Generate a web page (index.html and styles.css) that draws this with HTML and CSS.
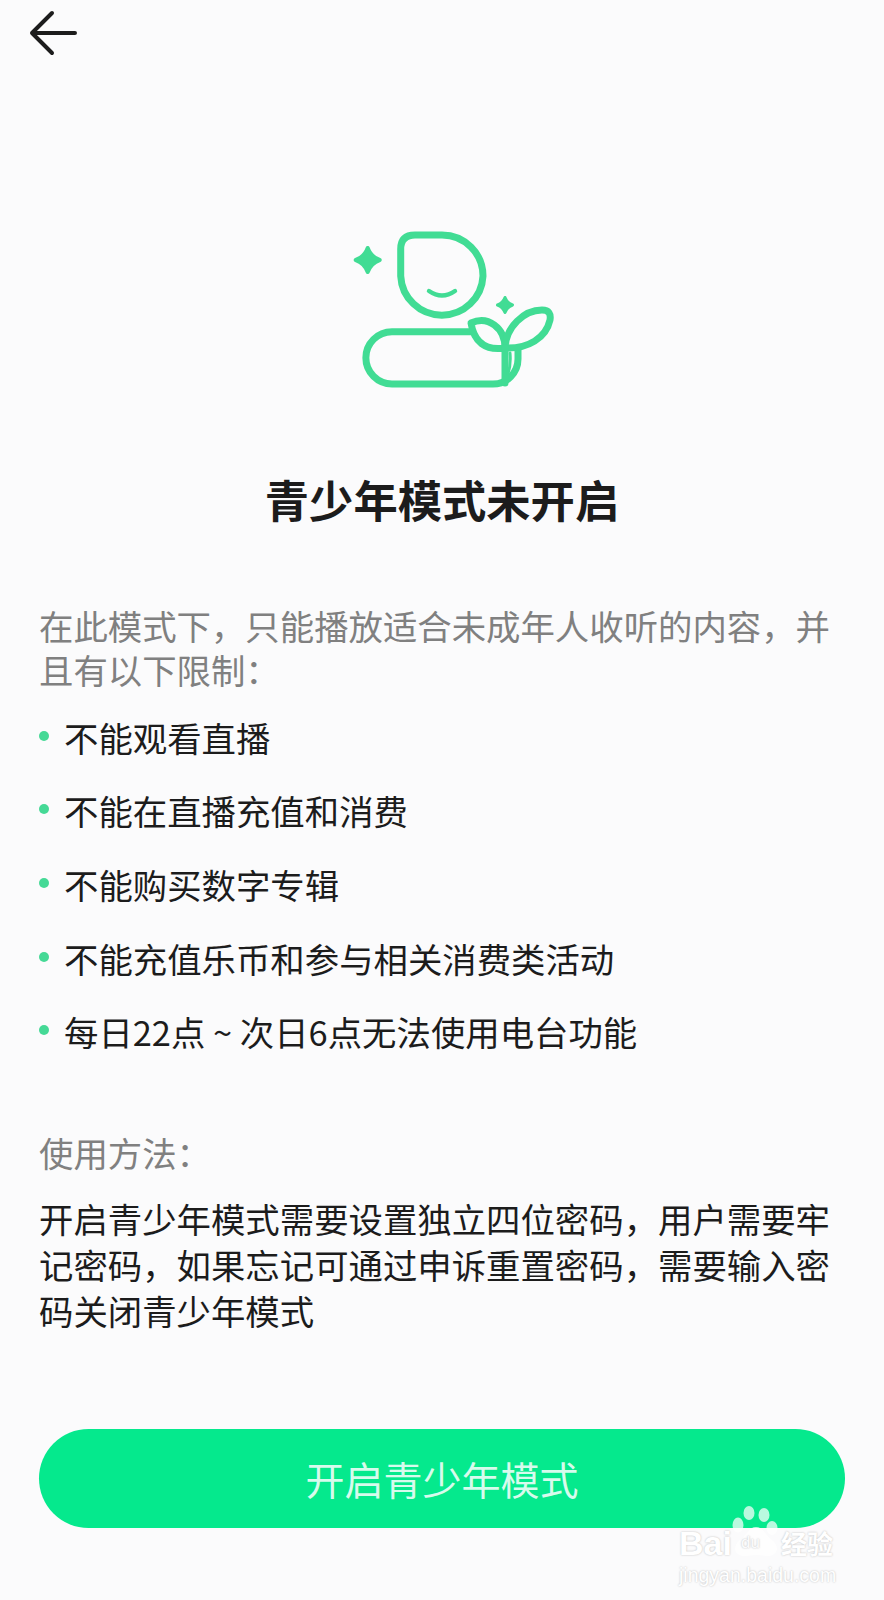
FILE: index.html
```html
<!DOCTYPE html>
<html lang="zh-CN">
<head>
    <meta charset="UTF-8">
    <meta name="viewport" content="width=device-width, initial-scale=1.0">
    <title>青少年模式</title>
    <link rel="stylesheet" href="styles.css">
</head>
<body>
    <div class="page">
        <div class="topbar">
            <svg class="back" width="60" height="56" viewBox="0 0 60 56" fill="none" stroke="#1c1c1c" stroke-width="4" stroke-linecap="round" stroke-linejoin="round">
                <path d="M23 13 L3 33 L23 53 M3 33 H46"/>
            </svg>
        </div>

        <div class="hero">
            <svg width="240" height="190" viewBox="0 0 240 190" fill="none" stroke="#41dc94" stroke-width="7" stroke-linecap="round" stroke-linejoin="round">
                <path d="M85 25 H112 A41 41 0 0 1 153 66 A41.2 41.2 0 0 1 70.7 66 V39 Q70.7 25 85 25 Z"/>
                <path d="M99 81 Q112 90 125 81" stroke-width="4.4"/>
                <path d="M141 121.7 H62 A26.1 26.1 0 0 0 62 174 H163 A25 25 0 0 0 188 149 V139"/>
                <path d="M141 113 C158 105 175 118 175 138 C155 141 144 132 141 113 Z"/>
                <path d="M175 138 C176 117 194 100 212 100 C219 100 221 104 220 110 C216 128 198 139 175 138 Z"/>
                <path d="M175 138 V173"/>
                <path d="M180 143 Q181 155 178 164" stroke-width="3"/>
                <path d="M37.7 38 Q41 47 49.700 50 Q41 53 37.7 62 Q34.500 53 25.700 50 Q34.500 47 37.7 38 Z" fill="#41dc94" stroke-width="4"/>
                <path d="M175 87.500 Q177 93 182.500 95 Q177 97 175 102.500 Q173 97 167.500 95 Q173 93 175 87.500 Z" fill="#41dc94" stroke-width="3"/>
            </svg>
        </div>

        <h1 class="title">青少年模式未开启</h1>

        <div class="content">
            <p class="note">在此模式下，只能播放适合未成年人收听的内容，并且有以下限制：</p>

            <ul class="limits">
                <li>不能观看直播</li>
                <li>不能在直播充值和消费</li>
                <li>不能购买数字专辑</li>
                <li>不能充值乐币和参与相关消费类活动</li>
                <li>每日22点 ~ 次日6点无法使用电台功能</li>
            </ul>

            <p class="note usage-label">使用方法：</p>
            <p class="usage">开启青少年模式需要设置独立四位密码，用户需要牢记密码，如果忘记可通过申诉重置密码，需要输入密码关闭青少年模式</p>
        </div>

        <button class="open-btn">开启青少年模式</button>

        <!-- watermark over the button corner -->
        <div class="watermark">
            <svg class="paw" width="64" height="64" viewBox="0 0 64 64" fill="#fff" fill-opacity="0.72">
                <ellipse cx="25" cy="9" rx="5.500" ry="7"/>
                <ellipse cx="40" cy="11" rx="5.500" ry="7"/>
                <ellipse cx="14" cy="21" rx="5.500" ry="7.500"/>
                <ellipse cx="48" cy="24" rx="5.500" ry="7"/>
                <path d="M32 23 C25 23 23 31 16 36 C7 43 11 53 22 52 C28 51 36 51 42 52 C53 53 57 43 48 36 C41 31 39 23 32 23 Z"/>
            </svg>
            <div class="wm-row"><span>Bai</span><span class="wm-du">du</span><span class="wm-cn">经验</span></div>
            <div class="wm-url">jingyan.baidu.com</div>
        </div>
    </div>
</body>
</html>
```

FILE: styles.css
```css
* {
    box-sizing: border-box;
}
body {
    margin: 0;
    background-color: #fbfbfc;
    font-family: "Noto Sans CJK SC", "Noto Sans", sans-serif;
}
.page {
    position: relative;
    width: 884px;
    height: 1600px;
    overflow: hidden;
}
.topbar {
    height: 70px;
    padding-left: 29px;
}
.back {
    display: block;
}
.hero {
    padding-left: 330px;
    margin-top: 140px;
    height: 190px;
}
.title {
    margin: 67px 0 0;
    font-size: 44.300px;
    line-height: 64px;
    font-weight: 700;
    color: #1c1c1c;
    text-align: center;
}
.content {
    margin-top: 72px;
    padding: 0 39px;
}
.note {
    margin: 0;
    font-size: 34.400px;
    line-height: 44px;
    color: #808080;
}
.limits {
    list-style: none;
    margin: 9px 0 0;
    padding: 0;
}
.limits li {
    display: flex;
    align-items: center;
    gap: 15px;
    height: 73.600px;
    font-size: 34.400px;
    color: #1c1c1c;
}
.limits li::before {
    content: "";
    width: 10px;
    height: 10px;
    margin-bottom: 2px;
    border-radius: 50%;
    background-color: #45d996;
}
.usage-label {
    margin-top: 62px;
}
.usage {
    margin: 21px 0 0;
    font-size: 34.400px;
    line-height: 46px;
    color: #1c1c1c;
}
.open-btn {
    display: block;
    width: 806px;
    height: 99px;
    margin: 96px 0 0 39px;
    border: none;
    border-radius: 50px;
    background-color: #05e98d;
    color: rgba(255, 255, 255, 0.85);
    font-family: inherit;
    font-size: 39px;
}
.watermark {
    position: absolute;
    left: 679px;
    top: 1504px;
    width: 180px;
    color: #fff;
    text-shadow: 0 0 2px #b8b8b8;
}
.paw {
    position: absolute;
    left: 45px;
    top: 0;
}
.wm-row {
    position: relative;
    display: flex;
    align-items: center;
    height: 30px;
    margin-top: 24px;
    font-family: "Liberation Sans", sans-serif;
    font-size: 34px;
    font-weight: 700;
    line-height: 30px;
}
.wm-du {
    width: 49px;
    padding-left: 9px;
    font-size: 17px;
    font-weight: 400;
    color: #fbfbfc;
}
.wm-cn {
    font-family: "Noto Sans CJK SC", sans-serif;
    font-size: 26px;
    font-weight: 700;
    white-space: nowrap;
}
.wm-url {
    position: relative;
    margin-top: 5px;
    font-family: "Liberation Sans", sans-serif;
    font-size: 19.500px;
    line-height: 24px;
    white-space: nowrap;
}
```
